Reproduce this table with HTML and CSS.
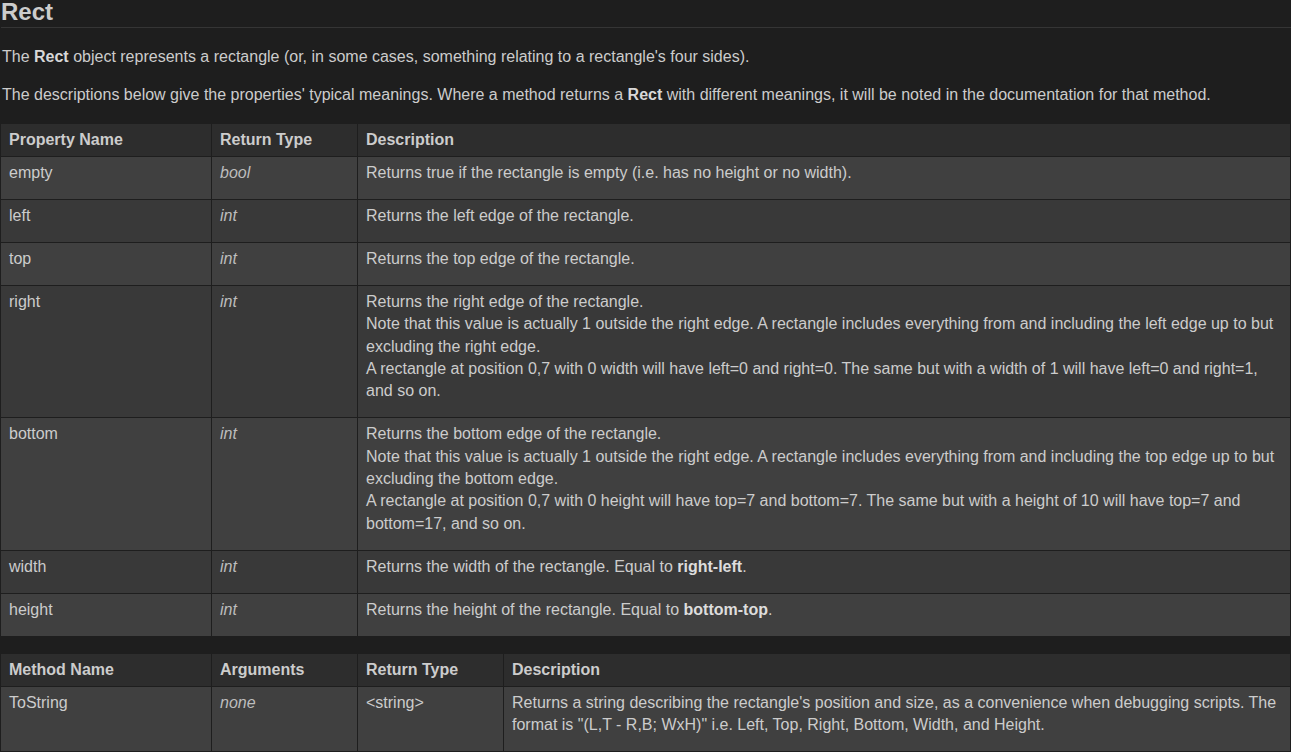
FILE: index.html
```html
<!DOCTYPE html>
<html>
<head>
<meta charset="utf-8">
<title>Rect</title>
<link rel="stylesheet" href="styles.css">
</head>
<body>
<h1 class="title">Rect</h1>
<p class="para para-first">The <b>Rect</b> object represents a rectangle (or, in some cases, something relating to a rectangle's four sides).</p>
<p class="para">The descriptions below give the properties' typical meanings. Where a method returns a <b>Rect</b> with different meanings, it will be noted in the documentation for that method.</p>

<table class="doc">
  <colgroup><col class="w-name"><col class="w-type"><col></colgroup>
  <thead>
    <tr><th>Property Name</th><th>Return Type</th><th>Description</th></tr>
  </thead>
  <tbody>
    <tr><td>empty</td><td class="type">bool</td><td>Returns true if the rectangle is empty (i.e. has no height or no width).</td></tr>
    <tr><td>left</td><td class="type">int</td><td>Returns the left edge of the rectangle.</td></tr>
    <tr><td>top</td><td class="type">int</td><td>Returns the top edge of the rectangle.</td></tr>
    <tr><td>right</td><td class="type">int</td><td>Returns the right edge of the rectangle.<br>Note that this value is actually 1 outside the right edge. A rectangle includes everything from and including the left edge up to but excluding the right edge.<br>A rectangle at position 0,7 with 0 width will have left=0 and right=0. The same but with a width of 1 will have left=0 and right=1, and so on.</td></tr>
    <tr><td>bottom</td><td class="type">int</td><td>Returns the bottom edge of the rectangle.<br>Note that this value is actually 1 outside the right edge. A rectangle includes everything from and including the top edge up to but excluding the bottom edge.<br>A rectangle at position 0,7 with 0 height will have top=7 and bottom=7. The same but with a height of 10 will have top=7 and bottom=17, and so on.</td></tr>
    <tr><td>width</td><td class="type">int</td><td>Returns the width of the rectangle. Equal to <b>right-left</b>.</td></tr>
    <tr><td>height</td><td class="type">int</td><td>Returns the height of the rectangle. Equal to <b>bottom-top</b>.</td></tr>
  </tbody>
</table>

<table class="doc">
  <colgroup><col class="w-name"><col class="w-type"><col class="w-type"><col></colgroup>
  <thead>
    <tr><th>Method Name</th><th>Arguments</th><th>Return Type</th><th>Description</th></tr>
  </thead>
  <tbody>
    <tr><td>ToString</td><td class="type">none</td><td>&lt;string&gt;</td><td>Returns a string describing the rectangle's position and size, as a convenience when debugging scripts. The format is "(L,T - R,B; WxH)" i.e. Left, Top, Right, Bottom, Width, and Height.</td></tr>
  </tbody>
</table>
</body>
</html>
```

FILE: styles.css
```css
html, body {
  margin: 0;
  padding: 0;
  background: #1e1e1e;
}
body {
  font-family: "Liberation Sans", Arial, sans-serif;
  font-size: 16px;
  line-height: 1.4;
  color: #cccccc;
}
.title {
  margin: 0 0 0 1px;
  font-size: 24px;
  line-height: 24px;
  font-weight: bold;
  padding-bottom: 3px;
  border-bottom: 1px solid #353535;
  color: #cccccc;
}
.para {
  margin: 16px 0 16px 2px;
}
.para-first {
  margin-top: 18px;
}
.para b {
  color: #d8d8d8;
}
.doc {
  width: 100%;
  table-layout: fixed;
  border-collapse: separate;
  border-spacing: 1px;
  margin: 0 0 16px 0;
  background: #1e1e1e;
}
.w-name { width: 210px; }
.w-type { width: 145px; }
.doc th {
  background: #2d2d2d;
  text-align: left;
  font-weight: bold;
  padding: 5px 8px;
  vertical-align: top;
  color: #cccccc;
}
.doc td {
  padding: 5px 8px 14.5px 8px;
  vertical-align: top;
  background: #404040;
  color: #cccccc;
}
.doc tbody tr:nth-child(even) td {
  background: #393939;
}
.doc td.type {
  font-style: italic;
  color: #bdbdbd;
}
.doc td b {
  color: #dddddd;
}
```
